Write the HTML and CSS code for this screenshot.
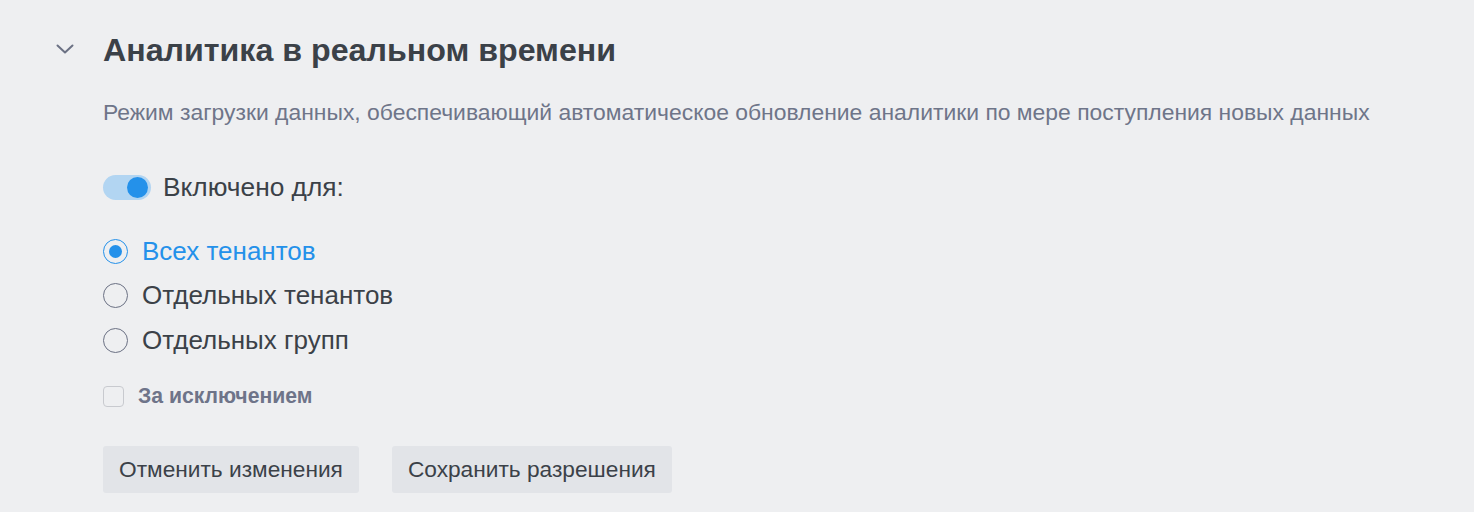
FILE: index.html
```html
<!DOCTYPE html>
<html lang="ru">
<head>
<meta charset="utf-8">
<title>Аналитика в реальном времени</title>
<link rel="stylesheet" href="styles.css">
</head>
<body>
<section class="panel">
  <header class="panel-head">
    <button class="chevron" aria-label="Свернуть">
      <svg width="18" height="10" viewBox="0 0 18 10"><path d="M1.5 1.5 L9 8.5 L16.5 1.5" fill="none" stroke="#6b7184" stroke-width="2" stroke-linecap="round" stroke-linejoin="round"/></svg>
    </button>
    <h2 class="title">Аналитика в реальном времени</h2>
  </header>
  <div class="panel-body">
    <p class="desc">Режим загрузки данных, обеспечивающий автоматическое обновление аналитики по мере поступления новых данных</p>
    <label class="toggle-row">
      <span class="toggle"><span class="knob"></span></span>
      <span class="toggle-label">Включено для:</span>
    </label>
    <div class="radios">
      <label class="radio checked"><span class="circle"><span class="dot"></span></span><span class="rlabel">Всех тенантов</span></label>
      <label class="radio"><span class="circle"></span><span class="rlabel">Отдельных тенантов</span></label>
      <label class="radio"><span class="circle"></span><span class="rlabel">Отдельных групп</span></label>
    </div>
    <label class="check-row">
      <span class="checkbox"></span>
      <span class="check-label">За исключением</span>
    </label>
    <div class="actions">
      <button class="btn">Отменить изменения</button>
      <button class="btn">Сохранить разрешения</button>
    </div>
  </div>
</section>
</body>
</html>
```

FILE: styles.css
```css
* { box-sizing: border-box; }
html, body { margin: 0; padding: 0; }
body {
  background: #eeeff1;
  font-family: "Liberation Sans", Arial, Helvetica, sans-serif;
  color: #3b4148;
  height: 512px;
  overflow: hidden;
}
.panel {
  padding: 28px 0 0 50px;
}
.panel-head {
  display: flex;
  align-items: center;
  height: 44px;
}
.chevron {
  width: 30px;
  height: 30px;
  padding: 0;
  border: 0;
  background: none;
  display: flex;
  align-items: center;
  justify-content: center;
  margin-right: 23px;
  margin-top: -2px;
}
.title {
  margin: 0;
  font-size: 32.2px;
  font-weight: 700;
  color: #3b4148;
  line-height: 44px;
}
.panel-body {
  padding-left: 53px;
}
.desc {
  margin: 26px 0 0;
  font-size: 22.9px;
  line-height: 28px;
  color: #6e7589;
}
.toggle-row {
  display: flex;
  align-items: center;
  margin-top: 47px;
  height: 28px;
}
.toggle {
  width: 48px;
  height: 25px;
  border-radius: 13px;
  background: #b2d5f2;
  position: relative;
  margin-right: 12px;
}
.knob {
  position: absolute;
  right: 3px;
  top: 2px;
  width: 21px;
  height: 21px;
  border-radius: 50%;
  background: #2491ea;
}
.toggle-label {
  font-size: 26.3px;
}
.radios {
  margin-top: 35px;
  display: flex;
  flex-direction: column;
  gap: 14.5px;
}
.radio {
  display: flex;
  align-items: center;
  height: 30px;
}
.circle {
  width: 25px;
  height: 25px;
  border-radius: 50%;
  border: 1.3px solid #6b7184;
  display: flex;
  align-items: center;
  justify-content: center;
  margin-right: 14px;
  background: transparent;
}
.radio.checked .circle { border-color: #2491ea; }
.dot {
  width: 13px;
  height: 13px;
  border-radius: 50%;
  background: #2491ea;
}
.rlabel { font-size: 26px; }
.radio.checked .rlabel { color: #2491ea; }
.check-row {
  display: flex;
  align-items: center;
  margin-top: 29px;
  height: 24px;
}
.checkbox {
  width: 21px;
  height: 21px;
  border: 1.5px solid #c8cacf;
  border-radius: 4px;
  margin-right: 14px;
}
.check-label {
  font-size: 21.2px;
  font-weight: 700;
  color: #6e7489;
}
.actions {
  display: flex;
  gap: 33px;
  margin-top: 38px;
}
.btn {
  height: 47px;
  padding: 0 16px;
  border: 0;
  border-radius: 3px;
  background: #e2e4e8;
  font-family: inherit;
  font-size: 22.7px;
  color: #3b4148;
}
```
